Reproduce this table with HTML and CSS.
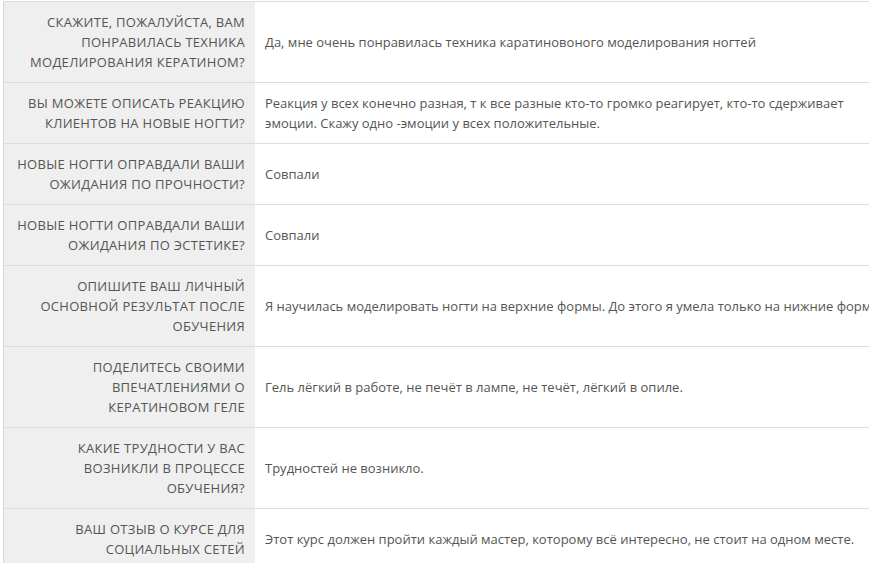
FILE: index.html
```html
<!DOCTYPE html>
<html lang="ru">
<head>
<meta charset="utf-8">
<link rel="stylesheet" href="styles.css">
</head>
<body>
<div class="wrap">
<table class="qa">
<tbody>
<tr><th>Скажите, пожалуйста, вам понравилась техника моделирования кератином?</th><td>Да, мне очень понравилась техника каратиновоного моделирования ногтей</td></tr>
<tr><th>Вы можете описать реакцию клиентов на новые ногти?</th><td>Реакция у всех конечно разная, т к все разные кто-то громко реагирует, кто-то сдерживает эмоции. Скажу одно -эмоции у всех положительные.</td></tr>
<tr><th>Новые ногти оправдали ваши ожидания по прочности?</th><td>Совпали</td></tr>
<tr><th>Новые ногти оправдали ваши ожидания по эстетике?</th><td>Совпали</td></tr>
<tr><th>Опишите ваш личный основной результат после обучения</th><td class="nowrap">Я научилась моделировать ногти на верхние формы. До этого я умела только на нижние формы.</td></tr>
<tr><th>Поделитесь своими впечатлениями о кератиновом геле</th><td>Гель лёгкий в работе, не печёт в лампе, не течёт, лёгкий в опиле.</td></tr>
<tr><th>Какие трудности у вас возникли в процессе обучения?</th><td>Трудностей не возникло.</td></tr>
<tr><th>Ваш отзыв о курсе для социальных сетей</th><td>Этот курс должен пройти каждый мастер, которому всё интересно, не стоит на одном месте.</td></tr>
</tbody>
</table>
</div>
</body>
</html>
```

FILE: styles.css
```css
html, body {
  margin: 0;
  padding: 0;
  background: #fff;
  overflow: hidden;
}
.wrap {
  padding: 1px 0 0 3px;
  width: 1000px;
}
.qa {
  border-collapse: collapse;
  border-left: 1px solid #d6d6d6;
  font-family: "Open Sans", sans-serif;
  font-size: 13px;
  line-height: 20px;
  color: #555;
}
.qa tr {
  border-top: 1px solid #dcdcdc;
  border-bottom: 1px solid #dcdcdc;
}
.qa th {
  width: 231px;
  padding: 10px 10px;
  background: #efefef;
  text-align: right;
  text-transform: uppercase;
  font-weight: normal;
  letter-spacing: 0.3px;
  vertical-align: middle;
}
.qa td {
  width: 620px;
  padding: 10px 10px;
  text-align: left;
  vertical-align: middle;
}
.qa td.nowrap {
  white-space: nowrap;
}
```
